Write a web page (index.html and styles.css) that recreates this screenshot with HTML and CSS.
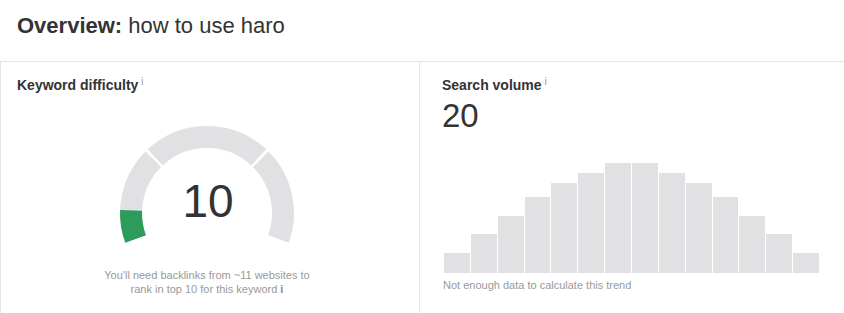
FILE: index.html
```html
<!DOCTYPE html>
<html lang="en">
<head>
  <meta charset="UTF-8">
  <title>Overview: how to use haro</title>
  <link rel="stylesheet" href="styles.css">
</head>
<body>

  <h1 class="page-title"><strong>Overview:</strong> how to use haro</h1>

  <div class="panels">
    <div class="panel kd">
      <h3 class="panel-title">Keyword difficulty<span class="info">i</span></h3>

      <svg class="gauge" width="180" height="122" viewBox="0 0 180 122">
        <path d="M 18.58 115.99 A 76 76 0 0 1 36.26 36.26" class="seg" />
        <path d="M 38.17 34.42 A 76 76 0 0 1 141.83 34.42" class="seg" />
        <path d="M 143.74 36.26 A 76 76 0 0 1 161.42 115.99" class="seg" />
        <path d="M 18.58 115.99 A 76 76 0 0 1 14.05 87.35" class="seg fill" />
        <text x="91" y="94" class="gauge-value">10</text>
      </svg>

      <p class="hint">You'll need backlinks from ~11 websites to<br>rank in top 10 for this keyword <b>i</b></p>
    </div>

    <div class="panel sv">
      <h3 class="panel-title">Search volume<span class="info">i</span></h3>
      <div class="volume">20</div>

      <div class="chart" id="chart"></div>
      <p class="note">Not enough data to calculate this trend</p>
    </div>
  </div>

  <script>
    // placeholder trend, heights in px
    const heights = [20, 39, 57, 76, 90, 100, 110, 110, 100, 90, 76, 57, 39, 20];
    const chart = document.getElementById("chart");
    heights.forEach(h => {
      const bar = document.createElement("div");
      bar.className = "bar";
      bar.style.height = h + "px";
      chart.appendChild(bar);
    });
  </script>

</body>
</html>
```

FILE: styles.css
```css
body {
  margin: 0;
  font-family: "Liberation Sans", Arial, sans-serif;
  color: #333333;
  background-color: #ffffff;
}

.page-title {
  margin: 0;
  padding: 13px 17px 23px;
  font-size: 22px;
  line-height: 25px;
  font-weight: normal;
  color: #333333;
}

.page-title strong {
  font-weight: bold;
}

.panels {
  display: flex;
  border-top: 1px solid #e5e5e5;
  border-left: 1px solid #e5e5e5;
  height: 260px;
}

.panel {
  box-sizing: border-box;
}

.kd {
  width: 419px;
  padding: 15px 22px 0 16px;
  border-right: 1px solid #e5e5e5;
  display: flex;
  flex-direction: column;
  align-items: center;
}

.sv {
  flex: 1;
  padding: 15px 24px 0 22px;
}

.panel-title {
  margin: 0;
  font-size: 14px;
  line-height: 16px;
  font-weight: bold;
  color: #333333;
  align-self: flex-start;
}

.info {
  font-size: 10px;
  font-weight: normal;
  color: #999999;
  vertical-align: top;
  line-height: 10px;
  margin-left: 3px;
}

.gauge {
  display: block;
  margin-top: 30px;
}

.seg {
  fill: none;
  stroke: #e1e1e3;
  stroke-width: 22;
}

.seg.fill {
  stroke: #2c9b5b;
}

.gauge-value {
  font-family: "Liberation Sans", Arial, sans-serif;
  font-size: 46px;
  fill: #333333;
  text-anchor: middle;
}

.hint {
  margin: 23px 0 0;
  font-size: 11px;
  line-height: 14px;
  color: #999999;
  text-align: center;
}

.hint b {
  color: #888888;
}

.volume {
  margin-top: 6px;
  font-size: 33px;
  line-height: 33px;
  color: #333333;
}

.chart {
  display: flex;
  align-items: flex-end;
  gap: 1px;
  height: 110px;
  margin: 31px 0 0 2px;
  width: 375px;
}

.bar {
  flex: 1;
  background-color: #e1e1e3;
}

.note {
  margin: 5px 0 0 1px;
  font-size: 11px;
  line-height: 14px;
  color: #999999;
}
```
